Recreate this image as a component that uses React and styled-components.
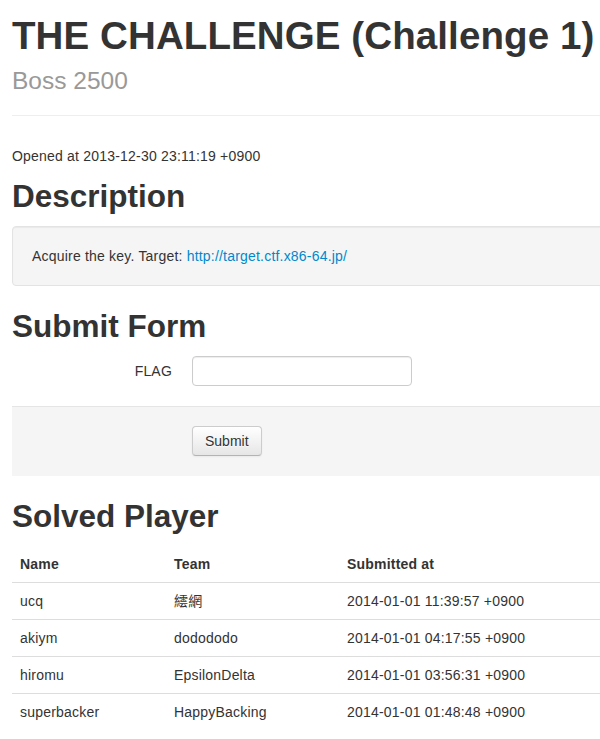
import React from "react";
import styled, { createGlobalStyle } from "styled-components";

const Global = createGlobalStyle`
  html, body { overflow: hidden; }
  body {
    margin: 0;
    font-family: "Liberation Sans", Arial, "Noto Sans CJK TC", sans-serif;
    font-size: 14px;
    line-height: 20px;
    letter-spacing: 0.2px;
    color: #333;
    background: #fff;
  }
`;

const Container = styled.div`
  width: 940px;
  padding: 0 0 0 12px;
`;

const PageHeader = styled.div`
  margin: 16px 0 30px;
  padding-bottom: 9px;
  border-bottom: 1px solid #eee;
`;

const Title = styled.h1`
  margin: 0 0 10px;
  font-size: 38.5px;
  line-height: 40px;
  font-weight: bold;
  letter-spacing: 0.1px;
  color: #333;
`;

const Sub = styled.small`
  font-size: 24.5px;
  font-weight: normal;
  line-height: 1;
  letter-spacing: 0;
  color: #999;
`;

const Para = styled.p`
  margin: 0 0 10px;
`;

const H2 = styled.h2`
  margin: 10px 0;
  font-size: 31.5px;
  line-height: 40px;
  font-weight: bold;
  letter-spacing: 0;
  color: #333;
`;

const Well = styled.div`
  min-height: 20px;
  padding: 19px;
  margin-bottom: 20px;
  background-color: #f5f5f5;
  border: 1px solid #e3e3e3;
  border-radius: 4px;
  box-shadow: inset 0 1px 1px rgba(0, 0, 0, 0.05);
`;

const Link = styled.a`
  color: #0088cc;
  text-decoration: none;
`;

const Form = styled.form`
  margin: 0 0 20px;
`;

const ControlGroup = styled.div`
  display: flex;
  margin-bottom: 10px;
`;

const Label = styled.label`
  width: 160px;
  padding-top: 5px;
  text-align: right;
  margin-right: 20px;
`;

const Input = styled.input`
  box-sizing: content-box;
  width: 206px;
  height: 20px;
  padding: 4px 6px;
  font-family: inherit;
  font-size: 14px;
  line-height: 20px;
  color: #555;
  background: #fff;
  border: 1px solid #ccc;
  border-radius: 4px;
  box-shadow: inset 0 1px 1px rgba(0, 0, 0, 0.075);
  margin: 0;
  outline: none;
`;

const Actions = styled.div`
  margin-top: 20px;
  padding: 19px 20px 20px 180px;
  background-color: #f5f5f5;
  border-top: 1px solid #e5e5e5;
`;

const Button = styled.button`
  display: inline-block;
  padding: 4px 12px;
  margin: 0;
  font-family: inherit;
  font-size: 14px;
  line-height: 20px;
  letter-spacing: 0;
  color: #333;
  text-shadow: 0 1px 1px rgba(255, 255, 255, 0.75);
  background-color: #f5f5f5;
  background-image: linear-gradient(to bottom, #ffffff, #e6e6e6);
  border: 1px solid #ccc;
  border-bottom-color: #b3b3b3;
  border-radius: 4px;
  box-shadow: inset 0 1px 0 rgba(255, 255, 255, 0.2), 0 1px 2px rgba(0, 0, 0, 0.05);
  cursor: pointer;
`;

const Table = styled.table`
  width: 100%;
  margin-bottom: 20px;
  border-collapse: collapse;
  border-spacing: 0;
`;

const Th = styled.th`
  width: ${(p) => p.$w || "auto"};
  padding: 8px;
  line-height: 20px;
  text-align: left;
  vertical-align: bottom;
  font-weight: bold;
`;

const Td = styled.td`
  padding: 8px;
  line-height: 20px;
  text-align: left;
  vertical-align: top;
  border-top: 1px solid #ddd;
`;

const rows = [
  ["ucq", "繧網", "2014-01-01 11:39:57 +0900"],
  ["akiym", "dodododo", "2014-01-01 04:17:55 +0900"],
  ["hiromu", "EpsilonDelta", "2014-01-01 03:56:31 +0900"],
  ["superbacker", "HappyBacking", "2014-01-01 01:48:48 +0900"],
];

export default function App() {
  return (
    <Container>
      <Global />
      <PageHeader>
        <Title>
          THE CHALLENGE (Challenge 1)
          <br />
          <Sub>Boss 2500</Sub>
        </Title>
      </PageHeader>
      <Para>Opened at 2013-12-30 23:11:19 +0900</Para>
      <H2>Description</H2>
      <Well>
        Acquire the key. Target: <Link href="#">http://target.ctf.x86-64.jp/</Link>
      </Well>
      <H2>Submit Form</H2>
      <Form onSubmit={(e) => e.preventDefault()}>
        <ControlGroup>
          <Label>FLAG</Label>
          <Input type="text" />
        </ControlGroup>
        <Actions>
          <Button type="submit">Submit</Button>
        </Actions>
      </Form>
      <H2>Solved Player</H2>
      <Table>
        <thead>
          <tr>
            <Th $w="138px">Name</Th>
            <Th $w="157px">Team</Th>
            <Th>Submitted at</Th>
          </tr>
        </thead>
        <tbody>
          {rows.map((r) => (
            <tr key={r[0]}>
              <Td>{r[0]}</Td>
              <Td>{r[1]}</Td>
              <Td>{r[2]}</Td>
            </tr>
          ))}
        </tbody>
      </Table>
    </Container>
  );
}
